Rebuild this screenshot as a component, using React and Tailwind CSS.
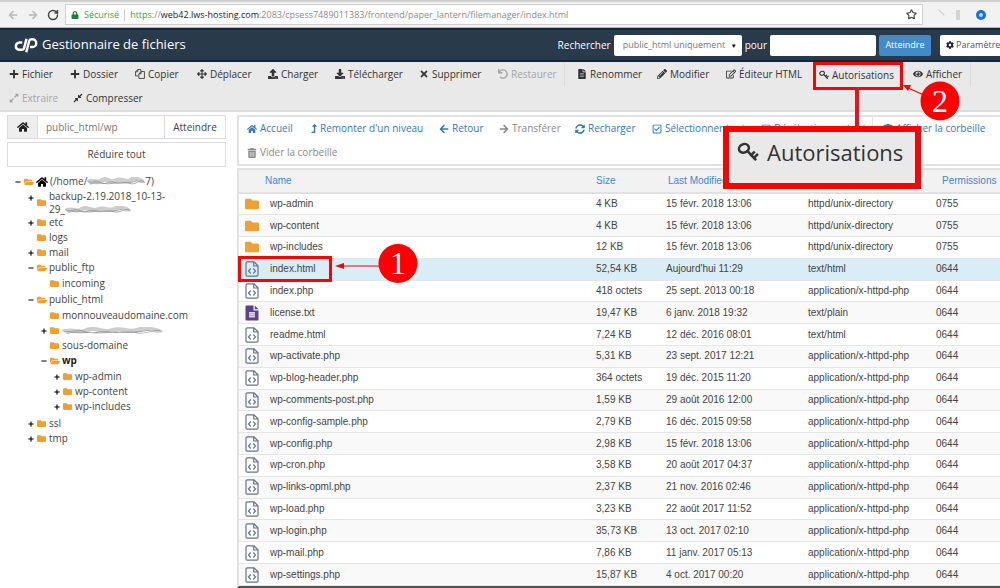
import React from "react";
import {
  FaPlus, FaArrowsAlt, FaUpload, FaDownload, FaTimes, FaUndo, FaFileAlt, FaPencilAlt, FaRegEdit, FaEye,
  FaExpandAlt, FaCompressAlt, FaHome, FaLevelUpAlt, FaArrowLeft, FaArrowRight, FaSyncAlt,
  FaRegCheckSquare, FaRegSquare, FaTrashAlt, FaCog, FaFolder, FaFolderOpen, FaMinus, FaLock,
} from "react-icons/fa";
import { LuRotateCw, LuStar } from "react-icons/lu";

const sans = "font-['Open_Sans','Noto_Sans',sans-serif]";

function KeyIcon({ className }) {
  return (
    <svg viewBox="0 0 24 22" className={className} fill="none" stroke="currentColor" aria-hidden="true">
      <ellipse cx="7.5" cy="7" rx="5.6" ry="4.6" strokeWidth="2.8" transform="rotate(-25 7.5 7)" />
      <path d="M11.5 10 L20 19 M15.5 14.5 L18.5 11.5 M18.5 17.5 L22 14" strokeWidth="2.8" strokeLinecap="square" />
    </svg>
  );
}

function CopyIcon({ className }) {
  return (
    <svg viewBox="0 0 18 18" className={className} fill="none" stroke="currentColor" strokeWidth="1.5" aria-hidden="true">
      <path d="M6 12.5 H1 V5 L5 1 H10.5 V4 M5 1 V5 H1" />
      <path d="M11 4.5 H17 V17 H7 V8.5 Z M11 4.5 V8.5 H7" />
    </svg>
  );
}

function CpanelLogo() {
  return (
    <svg viewBox="0 0 44 30" className="h-4 w-6 shrink-0" fill="none" stroke="white" strokeWidth="4.6" strokeLinejoin="round" role="img" aria-label="cPanel">
      <path d="M15 10.5 H9 A6.8 6.8 0 0 0 9 24 H14 Q17.500 24 18.400 20.500 L23 3.500" />
      <path d="M22.500 28.500 L28 7.500 Q28.800 4.300 32 4.300 H34 A7.200 7.200 0 0 1 34 18.700 H29.500" />
    </svg>
  );
}

function CodeFileIcon() {
  return (
    <svg viewBox="0 0 14 16" className="block h-4 w-[14px]" fill="none" stroke="#64748b" strokeWidth="1.2" aria-hidden="true">
      <path d="M2.500 .8 H9 L13 4.800 V14 Q13 15.200 11.800 15.200 H2.200 Q1 15.200 1 14 V2 Q1 .8 2.500 .8 Z M8.700 1 V5 H13" />
      <path d="M5.700 7.500 L3.500 10 L5.700 12.500 M8.300 7.500 L10.500 10 L8.300 12.500" />
    </svg>
  );
}

function TextFileIcon() {
  return (
    <svg viewBox="0 0 14 16" className="block h-4 w-[14px]" aria-hidden="true">
      <path d="M1.500 .5 H8.500 V5.500 H13.500 V14.500 Q13.500 15.500 12.500 15.500 H1.500 Q.5 15.500 .5 14.500 V1.500 Q.5 .5 1.500 .5 Z M9.800 .5 L13.500 4.200 H9.800 Z" fill="#5f418a" />
      <path d="M4 7 H10 V12.500 H4 Z" fill="#ded7e8" />
      <path d="M4 8.800 H10 M4 10.700 H10" stroke="#9c89b8" strokeWidth=".6" />
    </svg>
  );
}

function Scribble({ className }) {
  return (
    <svg viewBox="0 0 60 10" preserveAspectRatio="none" className={className} fill="none" aria-hidden="true">
      <path d="M1 6 C6 1 10 9 15 4 S24 8 30 4 S40 8 46 3 S55 7 59 4" stroke="#cdcdcd" strokeWidth="5" />
      <path d="M1 5 C5 8 9 2 14 6 S23 3 28 6 S38 4 44 7 S54 2 59 5 M3 8 C12 4 18 9 26 7 S40 9 52 4" stroke="#999" strokeWidth=".9" />
    </svg>
  );
}

function Tool({ icon: Icon, label, disabled, className = "h-6" }) {
  return (
    <button type="button" disabled={disabled} className={`flex shrink-0 items-center gap-[3px] whitespace-nowrap ${disabled ? "text-[#a5a5a5]" : "text-[#333]"} ${className}`}>
      <Icon className="size-[10px] shrink-0" />
      {label}
    </button>
  );
}

function NavLink({ icon: Icon, label, muted, className = "", iconSize = "size-[10px]" }) {
  return (
    <a href="#" className={`flex h-[23px] shrink-0 items-center gap-[3px] whitespace-nowrap ${muted ? "text-[#8a8a8a]" : "text-[#337ab7]"} ${className}`}>
      <Icon className={`${iconSize} shrink-0`} />
      {label}
    </a>
  );
}

function Node({ toggle, open, children, label, bold, tall }) {
  return (
    <li>
      <div className={`flex items-center ${tall ? "h-[25px]" : "h-[15px]"}`}>
        <span className={`flex w-[9px] shrink-0 items-center text-black ${tall ? "h-[15px] self-start" : ""}`}>
          {toggle === "+" && <FaPlus className="size-[6px]" />}
          {toggle === "-" && <FaMinus className="size-[6px]" />}
        </span>
        {open ? <FaFolderOpen className="mr-[2px] size-[10px] shrink-0 text-[#f0a02f]" /> : <FaFolder className="mr-[3px] size-[9px] shrink-0 text-[#f0a02f]" />}
        <span className={`flex items-center whitespace-nowrap ${bold ? "font-bold text-[#222]" : ""}`}>{label}</span>
      </div>
      {children && <ul className="py-px pl-[13px]">{children}</ul>}
    </li>
  );
}

const files = [
  ["dir", "wp-admin", "4 KB", "15 févr. 2018 13:06", "httpd/unix-directory", "0755"],
  ["dir", "wp-content", "4 KB", "15 févr. 2018 13:06", "httpd/unix-directory", "0755"],
  ["dir", "wp-includes", "12 KB", "15 févr. 2018 13:06", "httpd/unix-directory", "0755"],
  ["code", "index.html", "52,54 KB", "Aujourd'hui 11:29", "text/html", "0644"],
  ["code", "index.php", "418 octets", "25 sept. 2013 00:18", "application/x-httpd-php", "0644"],
  ["text", "license.txt", "19,47 KB", "6 janv. 2018 19:32", "text/plain", "0644"],
  ["code", "readme.html", "7,24 KB", "12 déc. 2016 08:01", "text/html", "0644"],
  ["code", "wp-activate.php", "5,31 KB", "23 sept. 2017 12:21", "application/x-httpd-php", "0644"],
  ["code", "wp-blog-header.php", "364 octets", "19 déc. 2015 11:20", "application/x-httpd-php", "0644"],
  ["code", "wp-comments-post.php", "1,59 KB", "29 août 2016 12:00", "application/x-httpd-php", "0644"],
  ["code", "wp-config-sample.php", "2,79 KB", "16 déc. 2015 09:58", "application/x-httpd-php", "0644"],
  ["code", "wp-config.php", "2,98 KB", "15 févr. 2018 13:06", "application/x-httpd-php", "0644"],
  ["code", "wp-cron.php", "3,58 KB", "20 août 2017 04:37", "application/x-httpd-php", "0644"],
  ["code", "wp-links-opml.php", "2,37 KB", "21 nov. 2016 02:46", "application/x-httpd-php", "0644"],
  ["code", "wp-load.php", "3,23 KB", "22 août 2017 11:52", "application/x-httpd-php", "0644"],
  ["code", "wp-login.php", "35,73 KB", "13 oct. 2017 02:10", "application/x-httpd-php", "0644"],
  ["code", "wp-mail.php", "7,86 KB", "11 janv. 2017 05:13", "application/x-httpd-php", "0644"],
  ["code", "wp-settings.php", "15,87 KB", "4 oct. 2017 00:20", "application/x-httpd-php", "0644"],
];

function BrowserBar() {
  return (
    <div className="flex h-7 shrink-0 items-center border-t-2 border-b border-t-[#cfcfcf] border-b-[#b5b5b5] bg-[#f2f2f2] pl-2 text-[#b8b8b8]">
      <button type="button" aria-label="Page précédente"><FaArrowLeft className="size-[10px]" /></button>
      <button type="button" aria-label="Page suivante" className="ml-[10px]"><FaArrowRight className="size-[10px]" /></button>
      <button type="button" aria-label="Actualiser" className="ml-[9px] text-[#444]"><LuRotateCw strokeWidth={3} className="size-3" /></button>
      <div className="ml-[6px] flex h-[21px] min-w-0 flex-1 items-center border border-[#cfcfcf] bg-white px-[5px] text-[9px] text-[#8a8a8a]">
        <FaLock className="size-2 text-[#188038]" />
        <span className="ml-[5px] text-[#3f9a5a]">Sécurisé</span>
        <span className="mx-[5px] h-3 w-px bg-[#ccc]" />
        <span className="whitespace-nowrap">
          <span className="text-[#3f9a5a]">https</span>://<span className="text-[#222]">web42.lws-hosting.com</span>:2083/cpsess7489011383/frontend/paper_lantern/filemanager/index.html
        </span>
        <LuStar strokeWidth={2.5} className="ml-auto size-[11px] text-[#444]" />
      </div>
      <div className="flex w-[77px] items-center gap-[13px] pl-3">
        <span className="h-2 w-2 rotate-45 border-t border-[#ccc]" />
        <span className="h-[10px] w-1 bg-[#d4d4d4]" />
        <span className="ml-[3px] flex size-[10px] items-center justify-center rounded-full bg-[#1a6fe0]"><span className="size-1 rounded-full bg-[#bcd8ff]" /></span>
      </div>
    </div>
  );
}

function Header() {
  return (
    <header className="flex h-[34px] shrink-0 items-center border-y-2 border-[#15263a] bg-[#293a4a] pl-[14px] text-white">
      <CpanelLogo />
      <h1 className="ml-1 flex-1 text-[13px] font-medium whitespace-nowrap">Gestionnaire de fichiers</h1>
      <label htmlFor="scope" className="mr-[3px] text-[10px] font-medium">Rechercher</label>
      <span className="relative flex">
        <select id="scope" className="h-[21px] w-[128px] appearance-none rounded-xs bg-white pl-[9px] text-[9px] text-[#777]">
          <option>public_html uniquement</option>
        </select>
        <span className="pointer-events-none absolute top-[7px] right-[5px] text-[6px] leading-[8px] text-black">▼</span>
      </span>
      <label htmlFor="query" className="mx-[3px] text-[10px] font-medium">pour</label>
      <input id="query" type="text" className="h-[21px] w-[106px] rounded-xs bg-white px-2 text-[10px] text-black" />
      <button type="button" className="ml-[3px] h-[21px] w-[52px] rounded-xs bg-[#428bca] text-[9px] font-medium">Atteindre</button>
      <button type="button" aria-label="Paramètres" className="ml-[9px] flex h-[21px] w-[60px] items-center gap-[2px] rounded-l-xs bg-white pl-[6px] text-[9px] whitespace-nowrap text-[#555]">
        <FaCog className="size-2 shrink-0 text-[#222]" />
        Paramètre
      </button>
    </header>
  );
}

function Toolbar() {
  return (
    <div className="shrink-0 border-b-2 border-[#dcdcdc] bg-[#e9e9e9] pl-[9px] text-[10px]">
      <div className="flex">
        <Tool icon={FaPlus} label="Fichier" className="h-6 w-[61px]" />
        <Tool icon={FaPlus} label="Dossier" className="h-6 w-[65px]" />
        <Tool icon={CopyIcon} label="Copier" className="h-6 w-[62px]" />
        <Tool icon={FaArrowsAlt} label="Déplacer" className="h-6 w-[71px]" />
        <Tool icon={FaUpload} label="Charger" className="h-6 w-[67px]" />
        <Tool icon={FaDownload} label="Télécharger" className="h-6 w-[84px]" />
        <Tool icon={FaTimes} label="Supprimer" className="h-6 w-[79px]" />
        <Tool icon={FaUndo} label="Restaurer" disabled className="h-6 w-[66px]" />
        <span className="mr-[12px] h-6 w-px bg-[#dcdcdc]" />
        <Tool icon={FaFileAlt} label="Renommer" className="h-6 w-[80px]" />
        <Tool icon={FaPencilAlt} label="Modifier" className="h-6 w-[69px]" />
        <Tool icon={FaRegEdit} label="Éditeur HTML" className="h-6 w-[87px]" />
        <div className="relative mr-[10px] h-7 w-[90px] border-[3px] border-[#f00] pl-[3px]">
          <Tool icon={KeyIcon} label="Autorisations" className="h-5" />
          <div className="absolute top-full right-[41px] z-10 h-[42px] w-1 bg-[#f0101c]" />
          <div className="absolute top-[61px] right-[-21px] z-10 flex h-[63px] w-[198px] items-start border-[6px] border-[#f00] bg-[#e9e9e9] pt-1 pl-2 text-[22px] leading-[32px] text-[#333]">
            <KeyIcon className="mt-[6px] mr-2 h-5 w-[22px] shrink-0 text-[#333]" />
            Autorisations
          </div>
          <svg className="absolute top-[14px] left-[86px] z-10 h-[42px] w-[60px]" viewBox="0 0 60 42" aria-hidden="true">
            <path d="M4 8 L24 17" stroke="#f00" strokeWidth="1.2" />
            <path d="M1 6 L9 6 L6 12 Z" fill="#f00" />
            <circle cx="38" cy="22" r="19.500" fill="#f00" />
            <text x="38" y="33" textAnchor="middle" fontSize="32" fill="#fff" fontFamily="Liberation Serif, serif">2</text>
          </svg>
        </div>
        <Tool icon={FaEye} label="Afficher" className="h-6 w-[57px]" />
        <span className="h-6 w-px bg-[#dcdcdc]" />
      </div>
      <div className="-mt-1 flex">
        <Tool icon={FaExpandAlt} label="Extraire" disabled className="h-6 w-[64px]" />
        <Tool icon={FaCompressAlt} label="Compresser" />
      </div>
    </div>
  );
}

function Sidebar() {
  return (
    <aside className="w-[230px] shrink-0 pt-[3px] pr-1 pl-[7px] text-[10px] text-[#444]">
      <div className="flex h-6 border border-[#dcdcdc]">
        <button type="button" aria-label="Accueil" className="flex w-[30px] items-center justify-center border-r border-[#dcdcdc] bg-[#eee] text-[#222]"><FaHome className="size-3" /></button>
        <input type="text" aria-label="Chemin" defaultValue="public_html/wp" className="w-[127px] border-r border-[#dcdcdc] px-2 text-[#777]" />
        <button type="button" className="flex-1">Atteindre</button>
      </div>
      <button type="button" className="mt-[3px] h-[25px] w-full border border-[#dcdcdc]">Réduire tout</button>
      <ul className="mt-[7px] pl-2">
        <Node toggle="-" open label={<><FaHome className="mr-[2px] size-[12px] text-black" />(/home/<Scribble className="h-[9px] w-[58px]" />7)</>}>
          <Node toggle="+" tall label={<span className="leading-[13px]">backup-2.19.2018_10-13-<br />29_<Scribble className="inline h-2 w-[66px]" /></span>} />
          <Node toggle="+" label="etc" />
          <Node label="logs" />
          <Node toggle="+" label="mail" />
          <Node toggle="-" open label="public_ftp">
            <Node label="incoming" />
          </Node>
          <Node toggle="-" open label="public_html">
            <Node label="monnouveaudomaine.com" />
            <Node toggle="+" label={<Scribble className="h-2 w-[101px]" />} />
            <Node label="sous-domaine" />
            <Node toggle="-" open bold label="wp">
              <Node toggle="+" label="wp-admin" />
              <Node toggle="+" label="wp-content" />
              <Node toggle="+" label="wp-includes" />
            </Node>
          </Node>
          <Node toggle="+" label="ssl" />
          <Node toggle="+" label="tmp" />
        </Node>
      </ul>
    </aside>
  );
}

function FileTable() {
  return (
    <div className="grid flex-1 border-b-2 border-l-2 border-b-[#555] border-l-[#e2e2e2] font-['Liberation_Sans',Arial,sans-serif] text-[10px]">
      <table className="w-full table-fixed border-collapse text-left leading-[14px] text-[#444]">
        <colgroup>
          <col className="w-[30px]" />
          <col />
          <col className="w-[70px]" />
          <col className="w-[142px]" />
          <col className="w-[128px]" />
          <col className="w-[64px]" />
        </colgroup>
        <thead>
          <tr className="h-6 border-y-2 border-[#e2e2e2] bg-[#f2f2f2] text-[#4287cf]">
            <th />
            <th className="p-0 font-normal"><span className="-ml-[4px]">Name</span></th>
            <th className="p-0 font-normal">Size</th>
            <th className="p-0 pl-[2px] font-normal">Last Modified</th>
            <th className="p-0 font-normal">Type</th>
            <th className="p-0 pl-[6px] font-normal">Permissions</th>
          </tr>
        </thead>
        <tbody>
          {files.map(([kind, name, size, date, type, perm]) => (
            <tr key={name} className={name === "index.html" ? "h-[21px] border-b border-[#e6e6e6] bg-[#d9edf7]" : "h-[21px] border-b border-[#e6e6e6] even:bg-[#f9f9f9]"}>
              <td className="p-0 pl-[6px]">
                {kind === "dir" && <FaFolder className="block size-[14px] text-[#eea236]" />}
                {kind === "code" && <CodeFileIcon />}
                {kind === "text" && <TextFileIcon />}
              </td>
              <td className="p-0 pl-px">
                {name === "index.html" ? (
                  <span className="relative">
                    {name}
                    <svg className="absolute top-[-20px] left-[-33px] z-10 h-11 w-[184px] max-w-none" viewBox="0 0 184 44" aria-hidden="true">
                      <rect x="2.500" y="14.500" width="91" height="23" fill="none" stroke="#f00" strokeWidth="3" />
                      <path d="M104 23 H145" stroke="#f00" strokeWidth="1.200" />
                      <path d="M98 23 L107 20 V26 Z" fill="#f00" />
                      <circle cx="161" cy="20.500" r="19.500" fill="#f00" />
                      <text x="161" y="31" textAnchor="middle" fontSize="32" fill="#fff" fontFamily="Liberation Serif, serif">1</text>
                    </svg>
                  </span>
                ) : name}
              </td>
              <td className="p-0">{size}</td>
              <td className="p-0">{date}</td>
              <td className="p-0">{type}</td>
              <td className="p-0">{perm}</td>
            </tr>
          ))}
        </tbody>
      </table>
    </div>
  );
}

export default function App() {
  return (
    <div className={`flex min-h-screen flex-col overflow-hidden bg-white ${sans}`}>
      <BrowserBar />
      <Header />
      <Toolbar />
      <main className="flex flex-1">
        <Sidebar />
        <section className="flex min-w-0 flex-1 flex-col pt-[3px] pl-[7px]">
          <nav className="mb-[2px] h-[51px] shrink-0 overflow-hidden border-2 border-r-0 border-[#e2e2e2] pl-2 text-[10px]">
            <div className="flex">
              <NavLink icon={FaHome} label="Accueil" className="w-[64px]" />
              <NavLink icon={FaLevelUpAlt} iconSize="h-[9px] w-[6px]" label="Remonter d'un niveau" className="w-[128px]" />
              <NavLink icon={FaArrowLeft} label="Retour" className="w-[60px]" />
              <NavLink icon={FaArrowRight} label="Transférer" muted className="w-[76px]" />
              <NavLink icon={FaSyncAlt} label="Recharger" className="w-[77px]" />
              <NavLink icon={FaRegCheckSquare} label="Sélectionner tout" className="w-[109px]" />
              <NavLink icon={FaRegSquare} label="Désélectionner tout" className="w-[111px]" />
              <span className="mr-[10px] h-6 w-px shrink-0 bg-[#e2e2e2]" />
              <NavLink icon={FaTrashAlt} label="Afficher la corbeille" />
            </div>
            <NavLink icon={FaTrashAlt} label="Vider la corbeille" muted />
          </nav>
          <FileTable />
        </section>
      </main>
    </div>
  );
}
